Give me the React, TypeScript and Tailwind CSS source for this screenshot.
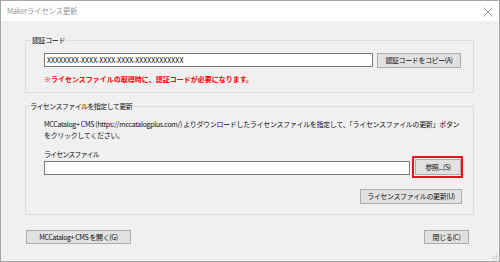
import React from "react";

const btn =
  "bg-[#e1e1e1] border border-[#adadad] text-[#111] flex items-center justify-center leading-none whitespace-nowrap";

export default function App() {
  return (
    <div className="w-[500px] h-[262px] bg-[#f0f0f0] border border-[#a5a5a5] flex flex-col font-['Noto_Sans_CJK_JP',sans-serif] text-[7px] tracking-[-0.4px] text-[#111] overflow-hidden">
      {/* title bar */}
      <div className="h-[20px] shrink-0 bg-white flex items-center justify-between pl-[6px] pr-[6px]">
        <span className="text-[7.5px] tracking-[-0.3px] text-[#9a9a9a]">Makerライセンス更新</span>
        <svg width="10" height="10" viewBox="0 0 10 10" className="mt-[2px]">
          <path d="M0.5 0.5 L9.5 9.5 M9.5 0.5 L0.5 9.5" stroke="#8a8a8a" strokeWidth="0.8" fill="none" />
        </svg>
      </div>

      <div className="flex-1 flex flex-col pl-[24px] pr-[25px] pt-[14px] relative">
        {/* group 1 */}
        <fieldset className="min-w-0 border border-[#dcdcdc] pl-[18px] pr-[11px] pt-[8px] pb-[8px]">
          <legend className="-ml-[13px] px-[1px] leading-[10px]">認証コード</legend>
          <div className="flex items-start gap-[4px]">
            <div className="w-[329px] h-[14px] bg-white border border-[#7a7a7a] flex items-center pl-[2px] leading-none tracking-[0px]">
              XXXXXXXX-XXXX-XXXX-XXXX-XXXXXXXXXXXX
            </div>
            <div className={`${btn} w-[84px] h-[15px]`}>認証コードをコピー(A)</div>
          </div>
          <div className="mt-[6px] leading-[10px] font-bold tracking-[0px] text-[#ff0000]">
            ※ライセンスファイルの取得時に、認証コードが必要になります。
          </div>
        </fieldset>

        {/* group 2 */}
        <fieldset className="min-w-0 mt-[8px] border border-[#dcdcdc] pl-[18px] pr-[11px] pt-[8px] pb-[10px]">
          <legend className="-ml-[15px] px-[1px] leading-[10px] tracking-[-0.6px]">ライセンスファイルを指定して更新</legend>
          <div className="leading-[11px] whitespace-nowrap tracking-[-0.32px]">
            MCCatalog+ CMS (https://mccatalogplus.com/) よりダウンロードしたライセンスファイルを指定して、「ライセンスファイルの更新」ボタン
            <br />
            をクリックしてください。
          </div>
          <div className="mt-[8px] leading-[10px] tracking-[-0.9px]">ライセンスファイル</div>
          <div className="flex items-end gap-[5px]">
            <div className="w-[366px] h-[14px] bg-white border border-[#7a7a7a]" />
            <div className="relative">
              <div className={`${btn} w-[46px] h-[16px]`}>参照...(S)</div>
              <div className="absolute -left-[3px] -right-[2px] -top-[3px] -bottom-[3px] border-2 border-[#e8101a] pointer-events-none" />
            </div>
          </div>
          <div className="flex justify-end mt-[14px]">
            <div className={`${btn} w-[102px] h-[15px]`}>ライセンスファイルの更新(U)</div>
          </div>
        </fieldset>

        {/* bottom buttons */}
        <div className="mt-[15px] flex justify-between pl-[1px] pr-[5px]">
          <div className={`${btn} w-[105px] h-[14px]`}>MCCatalog+ CMS を開く(G)</div>
          <div className={`${btn} w-[45px] h-[14px]`}>閉じる(C)</div>
        </div>

        {/* resize grip */}
        <svg width="6" height="6" viewBox="0 0 6 6" className="absolute right-[1px] bottom-[1px]">
          <rect x="4" y="0" width="1" height="1" fill="#b0b0b0" />
          <rect x="2" y="2" width="1" height="1" fill="#b0b0b0" />
          <rect x="4" y="2" width="1" height="1" fill="#b0b0b0" />
          <rect x="0" y="4" width="1" height="1" fill="#b0b0b0" />
          <rect x="2" y="4" width="1" height="1" fill="#b0b0b0" />
          <rect x="4" y="4" width="1" height="1" fill="#b0b0b0" />
        </svg>
      </div>
    </div>
  );
}
